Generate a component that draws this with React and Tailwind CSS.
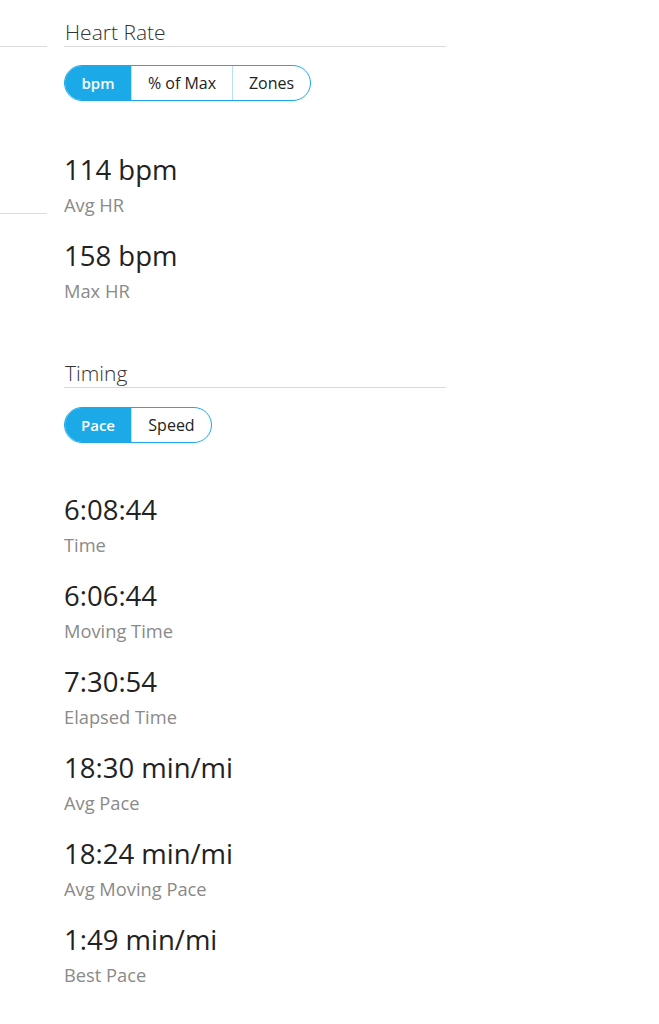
import { useState } from 'react'

const font = { fontFamily: '"Open Sans", "Noto Sans", sans-serif' }

function Segmented({ options, value, onChange, widths }) {
  return (
    <div className="inline-flex h-[36px] rounded-full border-[1.5px] border-[#1ba9e8] overflow-hidden bg-white">
      {options.map((opt, i) => {
        const active = opt === value
        return (
          <button
            key={opt}
            onClick={() => onChange(opt)}
            className={`h-full flex items-center justify-center ${
              active ? 'bg-[#1ba9e8] text-white font-semibold text-[15px]' : 'text-[#222] font-normal text-[16px]'
            } ${i > 0 ? 'border-l border-[#b5e1f5]' : ''} ${widths[i]}`}
          >
            {opt}
          </button>
        )
      })}
    </div>
  )
}

function Stat({ value, label }) {
  return (
    <div>
      <p className="text-[27.5px] leading-[40px] text-[#222]">{value}</p>
      <p className="text-[18.3px] leading-[26px] mt-[2px] text-[#8a8a8a]">{label}</p>
    </div>
  )
}

function Heading({ children }) {
  return (
    <h3 className="text-[21px] leading-[28px] font-light text-[#333] border-b border-[#d9d9d9] pl-px">
      {children}
    </h3>
  )
}

export default function App() {
  const [hr, setHr] = useState('bpm')
  const [timing, setTiming] = useState('Pace')

  return (
    <div className="min-h-[1024px] bg-white flex" style={font}>
      {/* cut-off left column */}
      <div className="w-[47px] shrink-0">
        <div className="h-[47px] border-b border-[#dcdcdc]" />
        <div className="h-[167px] border-b border-[#dcdcdc]" />
      </div>

      <div className="w-[382px] ml-[17px] pt-[18px]">
        <Heading>Heart Rate</Heading>
        <div className="mt-[18px]">
          <Segmented
            options={['bpm', '% of Max', 'Zones']}
            widths={['w-[66px]', 'w-[101px]', 'w-[78px]']}
            value={hr}
            onChange={setHr}
          />
        </div>
        <div className="mt-[49px] flex flex-col gap-[18px]">
          <Stat value="114 bpm" label="Avg HR" />
          <Stat value="158 bpm" label="Max HR" />
        </div>

        <div className="mt-[55px]">
          <Heading>Timing</Heading>
        </div>
        <div className="mt-[19px]">
          <Segmented
            options={['Pace', 'Speed']}
            widths={['w-[66px]', 'w-[80px]']}
            value={timing}
            onChange={setTiming}
          />
        </div>
        <div className="mt-[47px] flex flex-col gap-[18px]">
          <Stat value="6:08:44" label="Time" />
          <Stat value="6:06:44" label="Moving Time" />
          <Stat value="7:30:54" label="Elapsed Time" />
          <Stat value="18:30 min/mi" label="Avg Pace" />
          <Stat value="18:24 min/mi" label="Avg Moving Pace" />
          <Stat value="1:49 min/mi" label="Best Pace" />
        </div>
      </div>
    </div>
  )
}
